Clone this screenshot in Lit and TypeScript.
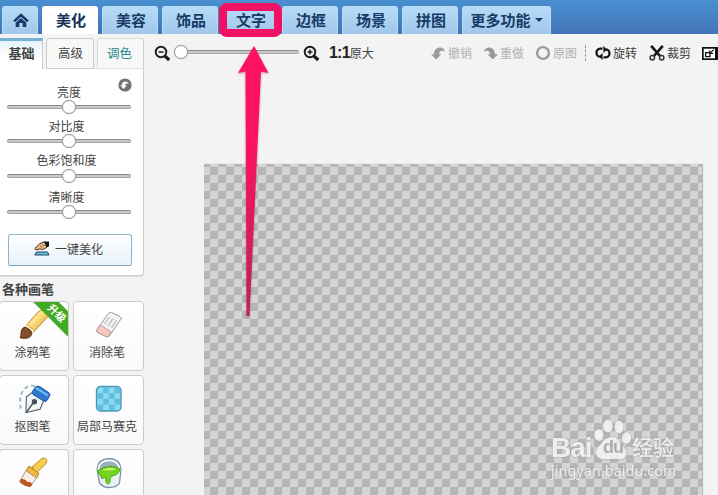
import { LitElement, html, svg, css } from "lit";
import { customElement, property } from "lit/decorators.js";

const TABS = ["美容", "饰品", "文字", "边框", "场景", "拼图"];
const SLIDERS = ["亮度", "对比度", "色彩饱和度", "清晰度"];

const zoomIcon = (plus: boolean) => html`<svg width="17" height="17" viewBox="0 0 17 17" fill="none" stroke="#1c1c1c">
  <circle cx="7" cy="7" r="5.3" stroke-width="1.9" />
  <path d="M4.500 7h5" stroke-width="1.500" />
  ${plus ? svg`<path d="M7 4.500v5" stroke-width="1.500" />` : ""}
  <path d="M10.800 10.800l4.400 4.200" stroke-width="3.200" />
</svg>`;

const icons = {
  home: html`<svg width="16" height="15" viewBox="0 0 16 15"><path d="M8 .3L.3 7.500l1.700 1.800L8 3.700l6 5.600 1.700-1.800z" fill="#173b66" /><path d="M2.700 9.800L8 4.900l5.300 4.900V14H9.700v-4H6.300v4H2.700z" fill="#173b66" /></svg>`,
  undo: html`<svg width="15" height="15" viewBox="0 0 16 15"><path d="M0 8.200h3.100C3.200 3.600 6.200.9 9.700 1c3 .1 4.800 2 5.100 4.600C13 4 9 4 8.600 8.200H11L5.600 14z" fill="#9b9b9b" /></svg>`,
  redo: html`<svg width="15" height="15" viewBox="0 0 16 15"><path d="M16 8.200h-3.100C12.800 3.600 9.800.9 6.300 1 3.300 1.100 1.500 3 1.200 5.600 3 4 7 4 7.400 8.200H5L10.400 14z" fill="#9b9b9b" /></svg>`,
  ring: html`<svg width="16" height="16" viewBox="0 0 16 16"><circle cx="8" cy="8" r="5.900" fill="none" stroke="#9b9b9b" stroke-width="2.400" /></svg>`,
  rotate: html`<svg width="16" height="14" viewBox="0 0 16 14"><path d="M7.500 2.700H5.300C2.800 2.700 1.500 4.700 1.500 6.700s1.500 4 3.800 4M8.500 11.300h2.200c2.500 0 3.800-2 3.800-4s-1.500-4-3.800-4" fill="none" stroke="#151515" stroke-width="2.300" /><path d="M7.600 7V14L3.800 10.500zM8.400 7V0L12.200 3.500z" fill="#151515" /></svg>`,
  scissors: html`<svg width="16" height="16" viewBox="0 0 16 16"><path d="M2.200.8L11 11M13.800.8L5 11" stroke="#161616" stroke-width="2.600" /><g fill="none" stroke="#333" stroke-width="1.500"><circle cx="3.300" cy="12.700" r="2.200" /><circle cx="12.700" cy="12.700" r="2.200" /></g></svg>`,
  resize: html`<svg width="16" height="13" viewBox="0 0 16 13"><rect x="0" y="0" width="17" height="13" fill="#111" /><rect x="1.700" y="1.700" width="11.300" height="9.600" fill="#fff" /><rect x="3.600" y="5.600" width="4.400" height="4" fill="none" stroke="#111" stroke-width="1.300" /><path d="M11.800 2.700L8.300 6M7.800 3.300v3.200h3.300" fill="none" stroke="#111" stroke-width="1.100" /></svg>`,
  reset: html`<svg width="14" height="14" viewBox="0 0 14 14"><circle cx="7" cy="7" r="6.600" fill="#747474" /><path d="M2.300 7.500h1.400C3.700 5 5.200 3.400 7.300 3.400c1.800 0 3.100 1 3.400 2.600-1.700-.9-3.400-.4-3.500 1.500h1.500L5.500 10.900z" fill="#fff" /></svg>`,
  hand: html`<svg width="16" height="15" viewBox="0 0 16 15"><path d="M2.500 11h11l1.500 3H.8z" fill="#69c5e8" stroke="#15313e" stroke-width=".9" /><path d="M.8 7.500L6 2.500 10 .8l3 1.700-.5 4-4 2.200-2.400-.9L2 9z" fill="#efb98c" stroke="#49311e" /><path d="M10 .5h5v5l-2.500 1z" fill="#171717" /><path d="M6 5l2.500 1.500M8 3.500L11 5" stroke="#825638" stroke-width=".8" /></svg>`,
  brush: html`<svg width="32" height="32" viewBox="0 0 32 32"><defs><linearGradient id="g" x1="0" y1="0" x2="1" y2="1"><stop offset="0" stop-color="#f7c648" /><stop offset=".4" stop-color="#ffe58c" /><stop offset="1" stop-color="#dc951d" /></linearGradient></defs><path d="M9 15.500L20.500 2.500q5-3 8 1l1.500 4L16.500 22z" fill="url(#g)" stroke="#c78b2c" /><path d="M9 15.500l7.500 6.500-2.500 2.700-7.500-6.200z" fill="#fff2c5" stroke="#cda554" stroke-width=".7" /><path d="M5.800 18.500c3-.5 7.900 2.500 7.900 5.800 0 4-5 6.200-11.700 4.400 2-1.500-.5-8 3.800-10.200z" fill="#80502c" stroke="#59351b" /></svg>`,
  eraser: html`<svg width="32" height="32" viewBox="0 0 32 32"><path d="M4 20.500L15.500 4.300q1.200-1.300 3-.7l8.500 4q1.700 1 .8 2.700L16.300 27q-1.200 1.600-3 .7L4.600 23.600q-1.400-1-.6-3.100z" fill="#f5f5f5" stroke="#999" /><path d="M7.500 16l10.500 6.700-2.200 4.200q-1.200 1.300-2.800.5l-8.400-4q-1.300-.8-.6-2.600z" fill="#f9c7c0" stroke="#b99692" stroke-width=".8" /><path d="M16.500 8l-5 7M20 9.500l-5 7.500M23.500 11l-5 8" stroke="#ccc" stroke-width="1.800" /></svg>`,
  pen: html`<svg width="34" height="32" viewBox="0 0 34 32"><path d="M18 3C9 1 3 9 3 18c0 5 .5 8 3 10" fill="none" stroke="#9ebdbe" stroke-width="2" stroke-dasharray="4 3" /><path d="M15.500 9.300L27 17l-4 9.300-14 3.200 .4-15.700z" fill="#f4f6f8" stroke="#4c6070" stroke-width="1.100" /><path d="M9.500 29l7-9.500" stroke="#46515c" stroke-width="1.300" /><circle cx="17.400" cy="18.700" r="2.700" fill="#44505d" /><path d="M18 4.500q2-2.500 5-.7l8.600 5.700q2 1.300 1 3.300l-2.400 4.500q-1.500 2-3.500.7L16 11.500q-1.700-1.200-.6-3z" fill="#2d78d1" stroke="#205398" /><path d="M19 5l12 7.500" stroke="#83bcf5" stroke-width="2" /></svg>`,
  mosaic: html`<svg width="28" height="28" viewBox="0 0 28 28"><rect x="1.500" y="1.500" width="24.500" height="24.500" rx="4" fill="#8adbed" stroke="#4896b5" stroke-width="1.400" />${[0, 1, 2, 3].map((r) => [0, 1, 2, 3].map((c) => (r + c) % 2 ? svg`<rect x=${2.5 + c * 5.7} y=${2.5 + r * 5.7} width="5.700" height="5.700" fill="#62bee0" />` : ""))}</svg>`,
  paint: html`<svg width="32" height="32" viewBox="0 0 32 32"><path d="M14 10L24 1.500q4-1.500 5 2.200-.2 3-3.200 5L20 14.500l-1.500 4.500z" fill="#f5cd51" stroke="#b98c21" /><path d="M11 9l10 7.500-2.500 4.500L8 13.700z" fill="#edb93d" stroke="#af7e24" /><path d="M8 13.700L18.500 21l-6 8.500Q6 29 1.500 24.500z" fill="#f8eee5" stroke="#b69a82" /><path d="M3.500 21.500l2.800 1 1.500.5 1.500 2 2.400-.3 2.800 2-2 3.300Q6 29.500 1.500 24.700z" fill="#bd552b" /></svg>`,
  bucket: html`<svg width="28" height="32" viewBox="0 0 28 32"><path d="M2 12Q3 2 14 1.500q11 .5 12 10.500l-1.500 14Q22 30.500 14 30.500 8 30.500 4.500 26z" fill="#e9f1f7" stroke="#7b91a2" stroke-width="1.300" /><ellipse cx="14" cy="12" rx="10.500" ry="8.500" fill="#9caebc" stroke="#fff" stroke-width="1.500" /><path d="M2.500 14q11-8 22.500-2-1 6-9 7.500l-1 3v3q-2.500 3-4-.2l-.2-4.500-1.700-.5-1.300 1.500q-2 0-1.800-3Q3.600 18 2.500 14z" fill="#75d51d" stroke="#42a510" /><path d="M7 13q7-4 14-1-5 2.600-14 1z" fill="#bcf46e" /></svg>`,
};

const TOOLS = [
  { label: "涂鸦笔", icon: icons.brush, badge: "升级" },
  { label: "消除笔", icon: icons.eraser },
  { label: "抠图笔", icon: icons.pen },
  { label: "局部马赛克", icon: icons.mosaic },
  { label: "", icon: icons.paint },
  { label: "", icon: icons.bucket },
];

@customElement("value-slider")
class ValueSlider extends LitElement {
  @property({ type: Number }) value = 50;
  static styles = css`
    :host { display: block; height: 14px; }
    .rail { position: relative; height: 14px; display: flex; align-items: center; }
    .line { box-sizing: border-box; flex: 1; height: 4px; border: 1px solid #a5a5a5; border-top-color: #888; background: #c9c9c9; border-radius: 2px; }
    .knob { position: absolute; box-sizing: border-box; width: 14px; height: 14px; border: 1px solid #999; border-radius: 50%; background: #fff; transform: translateX(-50%); box-shadow: 0 0 1px #aaa; }
  `;
  render() {
    return html`<div class="rail"><div class="line"></div><div class="knob" style="left:${this.value}%"></div></div>`;
  }
}

@customElement("app-root")
class AppRoot extends LitElement {
  static styles = css`
    :host { display: flex; flex-direction: column; position: relative; width: 718px; height: 495px; overflow: hidden; background: #f3f3f3; color: #444; font: 12px/16px "Noto Sans CJK SC", sans-serif; }
    * { box-sizing: border-box; }
    svg { display: block; flex: none; }
    .top { display: flex; gap: 4px; height: 34px; flex: none; padding: 6px 0 0 2px; background: linear-gradient(#4990d0, #4273b8); }
    .tab { width: 56px; display: flex; align-items: center; justify-content: center; padding: 0 0 1px 2px; color: #173b66; font-size: 15px; font-weight: 700; border-radius: 3px 3px 0 0; background: linear-gradient(#b7dbf8, #a0c6e9); border: 1px solid #b9dcf3; border-bottom: 0; }
    .tab.home { width: 36px; padding: 0 0 0 1px; }
    .tab.on { background: #fff; border-color: #fff; color: #153457; }
    .tab.more { width: 89px; gap: 4px; padding-left: 0; }
    .caret { border: 4px solid transparent; border-top-color: #173b66; border-bottom: 0; }
    .body { display: flex; flex: 1; min-height: 0; }
    .side { width: 144px; flex: none; display: flex; flex-direction: column; }
    .panel { height: 242px; flex: none; background: #fff; border-right: 1px solid #ccc; border-bottom: 1px solid #ccc; border-radius: 0 0 4px 0; box-shadow: 0 1px 1px #ddd; }
    .subs { display: flex; gap: 3px; padding-top: 4px; height: 35px; background: #f3f3f3; margin-right: -1px; }
    .sub { height: 31px; width: 48px; display: flex; align-items: center; justify-content: center; padding: 0 0 1px 1px; font-size: 12.500px; border: 1px solid #ccc; background: #f8f8f8; border-radius: 3px 3px 0 0; }
    .sub.on { width: 43px; border-left: 0; border-top: 3px solid #73b2d2; border-bottom: 0; border-radius: 0; font-size: 13px; font-weight: 700; padding: 0 0 4px 1px; background: linear-gradient(#e4f3fb, #fff 60%); }
    .sub.hue { width: 47px; padding-right: 3px; color: #31898b; border-color: #ddd #ccc #ddd #ddd; }
    .adjust { display: grid; grid-template-rows: 31px 34px 35px 36px; padding: 15px 12px 0 7px; }
    .row { display: flex; flex-direction: column; align-items: center; }
    .row value-slider { width: 124px; }
    .row + .row { padding-top: 3px; }
    .row:nth-child(4) { padding-top: 5px; }
    .row span { height: 17px; line-height: 16px; padding-right: 5px; }
    .row:nth-child(1) span { height: 16px; padding-right: 0; }
    .row:nth-child(2) span { height: 16px; }
    .row:nth-child(4) span { height: 16px; }
    .reset { position: absolute; left: 118px; top: 78px; }
    .auto { width: 124px; height: 32px; margin: 14px 0 0 8px; display: flex; align-items: center; gap: 5px; padding: 0 0 3px 25px; border: 1px solid #91b3c9; border-bottom-color: #7ba1b9; border-radius: 3px; background: linear-gradient(#fff, #e8f2fa); }
    .heading { flex: none; height: 25px; line-height: 23px; padding: 1px 0 0 2px; font-size: 13px; font-weight: 700; color: #444; }
    .tools { flex: none; display: grid; grid-template-columns: 70px 71px; grid-auto-rows: 70px; gap: 4px; margin-left: -1px; }
    .tool { position: relative; display: flex; flex-direction: column; align-items: center; overflow: hidden; border: 1px solid #ccc; border-radius: 4px; background: linear-gradient(#fff, #f9f9f9); }
    .pic { height: 42px; padding: 4px 0 0; display: flex; align-items: center; }
    .tool .name { line-height: 16px; white-space: nowrap; padding-right: 3px; }
    .ribbon { position: absolute; width: 60px; height: 18px; line-height: 17px; right: -19px; top: 2px; transform: rotate(45deg); background: #42aa22; color: #fff; text-align: center; font-size: 10.500px; font-weight: 700; }
    .main { flex: 1; display: flex; flex-direction: column; min-width: 0; }
    .bar { height: 130px; flex: none; display: flex; align-items: flex-start; padding: 10px 0 0 10px; }
    .item { height: 18px; display: flex; align-items: center; gap: 2px; white-space: nowrap; flex: none; }
    .zoom { width: 124px; margin: 0 4px; padding-bottom: 2px; }
    .fit { width: 102px; gap: 0; margin-left: 9px; }
    .one { font: 700 16px/18px "Liberation Sans", sans-serif; color: #222; letter-spacing: -.8px; }
    .off { color: #b1b1b1; }
    .undo { width: 52px; }
    .redo { width: 52px; }
    .orig { width: 50px; }
    .sep { height: 16px; border-left: 1px dashed #999; margin: 1px 9px 0 0; }
    .dark { color: #3c3c3c; }
    .rot { width: 54px; }
    .crop { width: 53px; }
    .canvas { width: 498px; flex: 1; margin-left: 60px; background: repeating-conic-gradient(#d5d5d5 0 25%, #b5b5b5 0 50%) 6px 3px / 16px 16px; box-shadow: 1px 0 1px #bbb; }
    .focus { position: absolute; left: 219px; top: 3px; width: 63px; height: 34px; border: 8px solid #f01363; border-radius: 8px; }
    .arrow { position: absolute; left: 230px; top: 40px; filter: drop-shadow(0 1px 1px #96435b88); }
    .mark { position: absolute; left: 551px; top: 416px; width: 128px; color: #f4f4f4; opacity: .87; filter: drop-shadow(0 0 1px #999); }
    .brand { display: flex; height: 45px; align-items: flex-end; }
    .bai { font: 700 28px/30px "Liberation Sans", sans-serif; width: 43px; letter-spacing: -1px; height: 28px; }
    .paw { position: relative; width: 37px; height: 44px; }
    .du { position: absolute; left: 9px; top: 18px; font: 700 18px/24px "Liberation Sans", sans-serif; letter-spacing: -1px; color: #aaa; }
    .exp { font-size: 21px; line-height: 28px; font-weight: 500; height: 29px; margin-left: 1px; white-space: nowrap; }
    .url { font: 14.300px/18px "Noto Sans", sans-serif; letter-spacing: .1px; margin-top: 1px; }
  `;

  render() {
    return html`
      <nav class="top">
        <div class="tab home">${icons.home}</div>
        <div class="tab on">美化</div>
        ${TABS.map((t) => html`<div class="tab">${t}</div>`)}
        <div class="tab more">更多功能<i class="caret"></i></div>
      </nav>
      <div class="body">
        <aside class="side">
          <section class="panel">
            <div class="subs"><div class="sub on">基础</div><div class="sub">高级</div><div class="sub hue">调色</div></div>
            <div class="adjust">
              ${SLIDERS.map((s) => html`<div class="row"><span>${s}</span><value-slider></value-slider></div>`)}
            </div>
            <div class="auto">${icons.hand}<span>一键美化</span></div>
          </section>
          <div class="heading">各种画笔</div>
          <div class="tools">
            ${TOOLS.map((t) => html`<div class="tool"><div class="pic">${t.icon}</div><div class="name">${t.label}</div>${t.badge ? html`<div class="ribbon">${t.badge}</div>` : ""}</div>`)}
          </div>
        </aside>
        <main class="main">
          <div class="bar">
            <div class="item">${zoomIcon(false)}</div>
            <div class="item zoom"><value-slider .value=${5} style="width:100%"></value-slider></div>
            <div class="item">${zoomIcon(true)}</div>
            <div class="item fit"><span class="one">1:1</span><span>原大</span></div>
            <div class="item off undo">${icons.undo}撤销</div>
            <div class="item off redo">${icons.redo}重做</div>
            <div class="item off orig">${icons.ring}原图</div>
            <i class="sep"></i>
            <div class="item dark rot">${icons.rotate}旋转</div>
            <div class="item dark crop">${icons.scissors}裁剪</div>
            <div class="item">${icons.resize}</div>
          </div>
          <div class="canvas"></div>
        </main>
      </div>
      <div class="reset">${icons.reset}</div>
      <div class="mark">
        <div class="brand"><span class="bai">Bai</span>
          <span class="paw"><svg width="37" height="44" viewBox="0 0 37 44" fill="#f4f4f4"><ellipse cx="5" cy="18" rx="4.500" ry="6" /><ellipse cx="14" cy="9" rx="4.700" ry="6.500" /><ellipse cx="25" cy="10" rx="4.500" ry="6.300" /><ellipse cx="32.500" cy="21" rx="4.500" ry="5.700" /><path d="M18 20c6 0 7 5 11 9 7 7 2 14-4 13H11C3 43-1 36 5 29c4-4 7-9 13-9z" /></svg><span class="du">du</span></span>
          <span class="exp">经验</span></div>
        <div class="url">jingyan.baidu.com</div>
      </div>
      <div class="focus"></div>
      <svg class="arrow" width="50" height="285" viewBox="0 0 50 285"><defs><linearGradient id="a" x1="0" y1="0" x2="0" y2="1"><stop offset=".35" stop-color="#fc1260" /><stop offset="1" stop-color="#bd2451" /></linearGradient></defs><path d="M24 6L38.500 33l-7.500-1.500L19.500 276h-3L15.500 31.500 8 33z" fill="url(#a)" /></svg>
    `;
  }
}
